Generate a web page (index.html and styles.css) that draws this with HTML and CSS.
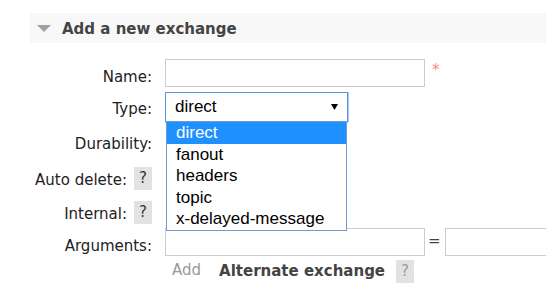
FILE: index.html
```html
<!DOCTYPE html>
<html>
<head>
<meta charset="utf-8">
<link rel="stylesheet" href="styles.css">
</head>
<body>
<div class="section">
  <div class="section-header">
    <svg class="toggle" width="14" height="7" viewBox="0 0 14 7"><polygon points="0,0 14,0 7,7" fill="#a0a0a0"/></svg>
    <h2 class="title">Add a new exchange</h2>
  </div>
  <div class="form">
    <div class="label row-name">Name:</div>
    <div class="field">
      <div class="input input-wide"></div>
      <span class="required">*</span>
    </div>

    <div class="label row-type">Type:</div>
    <div class="field">
      <div class="select-wrap">
        <div class="select">
          <span class="select-value">direct</span>
          <svg class="caret" width="7" height="6" viewBox="0 0 7 6"><polygon points="0,0 7,0 3.5,6" fill="#000"/></svg>
        </div>
        <ul class="listbox">
          <li class="option selected">direct</li>
          <li class="option">fanout</li>
          <li class="option">headers</li>
          <li class="option">topic</li>
          <li class="option">x-delayed-message</li>
        </ul>
      </div>
    </div>

    <div class="label row-durability">Durability:</div>
    <div class="field"></div>

    <div class="label label-help"><span class="label-text">Auto delete:</span><span class="help">?</span></div>
    <div class="field"></div>

    <div class="label label-help"><span class="label-text">Internal:</span><span class="help">?</span></div>
    <div class="field"></div>

    <div class="label row-args">Arguments:</div>
    <div class="field field-args">
      <div class="input input-wide"></div>
      <span class="equals">=</span>
      <div class="input input-wide"></div>
    </div>

    <div class="field field-add">
      <span class="add">Add</span>
      <span class="alt">Alternate exchange</span>
      <span class="help help-light">?</span>
    </div>
  </div>
</div>
</body>
</html>
```
FILE: styles.css
```css
html, body {
  margin: 0;
  padding: 0;
  overflow: hidden;
  background: #fff;
}
body {
  font-family: "DejaVu Sans", Verdana, sans-serif;
  font-size: 15px;
  color: #222;
  width: 546px;
  height: 295px;
}
.section {
  margin-left: 30px;
  padding-top: 13px;
}
.section-header {
  height: 30px;
  background: #f8f8f8;
  display: flex;
  align-items: center;
  padding-left: 7px;
}
.toggle {
  display: block;
  margin-top: 1px;
}
.title {
  margin: 0 0 0 11px;
  font-size: 15px;
  font-weight: bold;
  color: #444;
  line-height: 18px;
  margin-top: 1px;
}
.form {
  margin-top: 16px;
  display: grid;
  grid-template-columns: 122px minmax(0, 1fr);
  grid-template-rows: 33px 35px 36px 34px 31px 32px 35px;
  column-gap: 13px;
}
.label {
  text-align: right;
  line-height: 18px;
  white-space: nowrap;
  color: #222;
}
.row-name { padding-top: 9px; }
.row-type { padding-top: 8px; }
.row-durability { padding-top: 8px; }
.row-args { padding-top: 9px; }
.label-help {
  display: flex;
  justify-content: flex-end;
  align-items: flex-start;
  gap: 7px;
  padding-top: 4px;
}
.label-text {
  margin-top: 4px;
}
.help {
  display: inline-block;
  width: 18px;
  height: 23px;
  line-height: 23px;
  text-align: center;
  background: #e2e2e2;
  color: #333;
}
.help-light {
  color: #999;
  margin-left: 11px;
}
.field {
  display: flex;
  align-items: flex-start;
  white-space: nowrap;
}
.input {
  box-sizing: border-box;
  height: 28px;
  border: 1px solid #ccc;
  background: #fff;
  flex: none;
}
.input-wide {
  width: 260px;
}
.required {
  color: #f88;
  margin-left: 7px;
  margin-top: 2px;
  line-height: 18px;
}
.select-wrap {
  position: relative;
  width: 183px;
}
.select {
  box-sizing: border-box;
  height: 30px;
  width: 183px;
  border: 1px solid #5b96e6;
  box-shadow: 1px 0 0 0 #a9c6f2, 0 1px 0 0 #a9c6f2;
  display: flex;
  align-items: center;
  justify-content: space-between;
  padding: 0 9px 0 9px;
  font-family: "Liberation Sans", Arial, sans-serif;
  font-size: 17px;
  color: #000;
}
.caret {
  display: block;
}
.listbox {
  position: absolute;
  top: 29px;
  left: 1px;
  width: 181px;
  box-sizing: border-box;
  margin: 0;
  padding: 0;
  list-style: none;
  border: 1px solid #7a98d0;
  background: #fff;
  font-family: "Liberation Sans", Arial, sans-serif;
  font-size: 17px;
  color: #000;
  z-index: 2;
}
.option {
  height: 21.6px;
  line-height: 21.6px;
  padding-left: 9px;
}
.option.selected {
  background: #1e90ff;
  color: #fff;
}
.field-args {
  overflow: hidden;
}
.equals {
  color: #444;
  margin: 4px 4px 0 3px;
  line-height: 18px;
}
.field-add {
  grid-column: 2;
}
.add {
  color: #999;
  margin-left: 7px;
  margin-top: 1px;
  line-height: 18px;
}
.alt {
  font-weight: bold;
  color: #444;
  margin-left: 18px;
  margin-top: 2px;
  line-height: 18px;
}
```
